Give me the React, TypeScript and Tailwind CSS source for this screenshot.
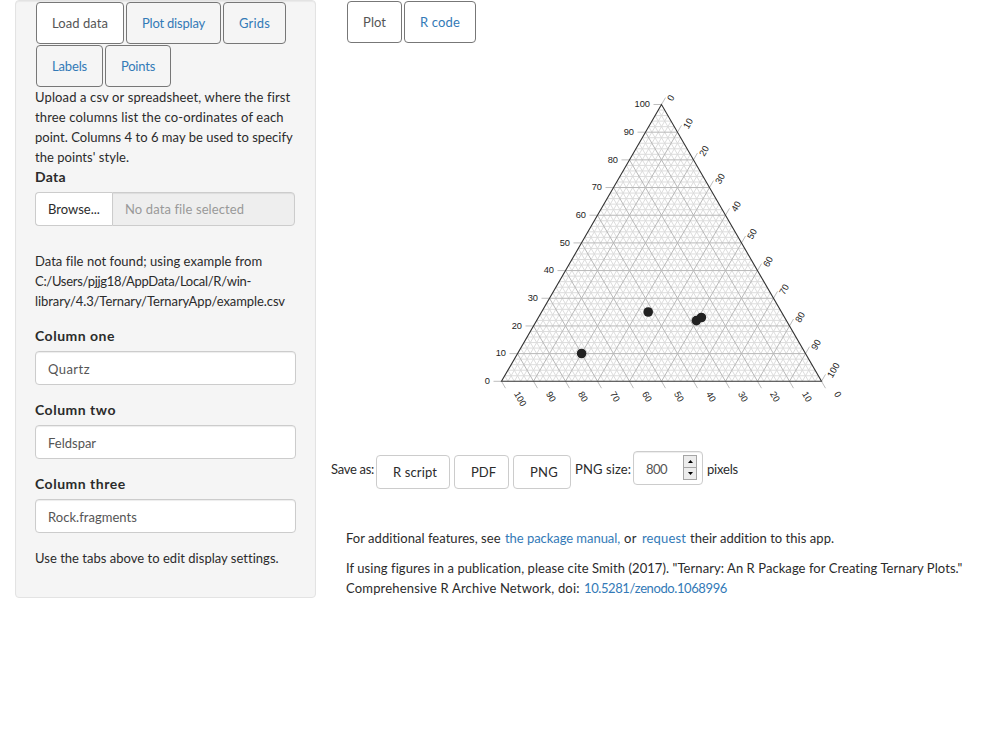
import type { ReactNode } from "react";

const APEX = { x: 661.5, y: 104.5 };
const SIDE = 320;
const HEIGHT = 276.8;
const LEFT_X = APEX.x - SIDE / 2;
const BASE_Y = APEX.y + HEIGHT;
const STEPS = Array.from({ length: 11 }, (_, i) => i * 10);
const MINOR = Array.from({ length: 49 }, (_, i) => (i + 1) * 2).filter((v) => v % 10 !== 0);
const MAJOR = STEPS.slice(1, -1);

const leftEdge = (v: number) => [LEFT_X + (SIDE / 2) * (v / 100), BASE_Y - HEIGHT * (v / 100)];
const rightEdge = (v: number) => [APEX.x + (SIDE / 2) * (v / 100), APEX.y + HEIGHT * (v / 100)];
const bottomEdge = (v: number) => [LEFT_X + SIDE * (1 - v / 100), BASE_Y];

// The three families of grid lines for one percentage value.
function gridPath(v: number) {
  const [lx, ly] = leftEdge(v);
  const [hx] = rightEdge(100 - v);
  const [rx, ry] = rightEdge(v);
  const [bx, by] = bottomEdge(100 - v);
  return `M${lx} ${ly}H${hx}M${rx} ${ry}L${bx} ${by}L${lx} ${ly}`;
}

const POINTS = [
  [581.6, 353.5],
  [648.2, 312],
  [696.4, 320.6],
  [701.4, 317.5],
];

function TernaryPlot() {
  return (
    <svg
      className="block"
      width="400"
      height="340"
      viewBox="460 80 400 340"
      fontFamily='"Liberation Sans", Arial, sans-serif'
      fontSize="9.3"
      fill="#1c1c1c"
    >
      <g fill="none">
        {MINOR.map((v) => (
          <path key={v} d={gridPath(v)} stroke="#dadada" strokeWidth="0.95" />
        ))}
        {MAJOR.map((v) => (
          <path key={v} d={gridPath(v)} stroke="#b8b8b8" strokeWidth="1" />
        ))}
      </g>
      {STEPS.map((v) => {
        const [lx, ly] = leftEdge(v);
        const [rx, ry] = rightEdge(v);
        const [bx, by] = bottomEdge(v);
        return (
          <g key={v}>
            <path
              d={`M${lx} ${ly}h-8M${rx} ${ry}l4 -6.9M${bx} ${by}l4 6.9`}
              stroke="#bdbdbd"
              fill="none"
            />
            <text x={lx - 11.5} y={ly + 2.7} textAnchor="end">
              {v}
            </text>
            <text transform={`translate(${rx + 8} ${ry - 4.4}) rotate(-60)`} dy="3.2">
              {v}
            </text>
            <text transform={`translate(${bx + 14.9} ${by + 10.8}) rotate(60)`} dy="3.2">
              {v}
            </text>
          </g>
        );
      })}
      <path
        d={`M${APEX.x} ${APEX.y}L${LEFT_X} ${BASE_Y}H${LEFT_X + SIDE}Z`}
        fill="none"
        stroke="#333"
        strokeWidth="1.1"
      />
      {POINTS.map(([x, y]) => (
        <circle key={x} cx={x} cy={y} r="4.8" fill="#222" />
      ))}
    </svg>
  );
}

function Tab({ className, active, children }: { className: string; active?: boolean; children: ReactNode }) {
  return (
    <button
      className={`flex h-[42px] shrink-0 items-center justify-center rounded border border-[#777] whitespace-nowrap ${
        active ? "bg-white text-[#555]" : "text-[#337ab7]"
      } ${className}`}
    >
      {children}
    </button>
  );
}

function Field({ label, value, className }: { label: string; value: string; className: string }) {
  return (
    <div className="mb-[15px]">
      <div className="mb-[5px] h-5 text-[14px] font-bold tracking-[0.5px]">{label}</div>
      <div
        className={`flex h-[34px] w-[261px] items-center rounded border border-[#ccc] bg-white px-3 pt-0.5 text-[#555] shadow-[inset_0_1px_1px_rgba(0,0,0,0.075)] ${className}`}
      >
        {value}
      </div>
    </div>
  );
}

function SaveButton({ className, children }: { className: string; children: ReactNode }) {
  return (
    <button
      className={`mt-1 flex h-[34px] items-center justify-center rounded border border-[#ccc] bg-white pl-1 ${className}`}
    >
      {children}
    </button>
  );
}

export default function App() {
  return (
    <div className="flex h-[744px] w-[992px] items-start overflow-hidden bg-white pl-[15px] font-[Lato,sans-serif] text-[13px] leading-5 text-[#2b2b2b]">
      <aside className="h-[598px] w-[301px] shrink-0 rounded border border-[#e3e3e3] bg-[#f5f5f5] pt-px pl-[19px] shadow-[inset_0_1px_1px_rgba(0,0,0,0.05)]">
        <nav className="ml-px flex w-[252px] flex-wrap gap-x-0.5 gap-y-px">
          <Tab active className="w-[88px] tracking-[0.06px]">Load data</Tab>
          <Tab className="w-[95px] tracking-[-0.2px]">Plot display</Tab>
          <Tab className="w-[63px] tracking-[0.16px]">Grids</Tab>
          <Tab className="w-[67px] tracking-[-0.15px]">Labels</Tab>
          <Tab className="w-[66px] tracking-[-0.2px]">Points</Tab>
        </nav>
        <div className="whitespace-nowrap">
          <div className="tracking-[0.13px]">Upload a csv or spreadsheet, where the first</div>
          <div className="tracking-[0.15px]">three columns list the co-ordinates of each</div>
          <div className="tracking-[0.03px]">point. Columns 4 to 6 may be used to specify</div>
          <div className="tracking-[0.04px]">the points' style.</div>
        </div>
        <div className="mb-[5px] h-5 text-[14px] font-bold tracking-[0.3px]">Data</div>
        <div className="flex h-[34px] w-[260px]">
          <button className="w-[77px] rounded-l border border-r-0 border-[#ccc] bg-white">Browse...</button>
          <div className="flex flex-1 items-center rounded-r border border-[#ccc] bg-[#eee] pl-3 tracking-[0.11px] text-[#999] shadow-[inset_0_1px_1px_rgba(0,0,0,0.075)]">
            No data file selected
          </div>
        </div>
        <div className="mt-[25px] mb-[15px] whitespace-nowrap">
          <div className="tracking-[0.04px]">Data file not found; using example from</div>
          <div className="tracking-[-0.3px]">C:/Users/pjjg18/AppData/Local/R/win-</div>
          <div className="tracking-[-0.086px]">library/4.3/Ternary/TernaryApp/example.csv</div>
        </div>
        <Field label="Column one" value="Quartz" className="tracking-[0.45px]" />
        <Field label="Column two" value="Feldspar" className="tracking-normal" />
        <Field label="Column three" value="Rock.fragments" className="tracking-[0.04px]" />
        <div className="tracking-[0.02px]">Use the tabs above to edit display settings.</div>
      </aside>

      <main className="ml-[15px] flex flex-1 flex-col">
        <nav className="flex gap-0.5 pt-px pl-4">
          <Tab active className="w-[55px]">Plot</Tab>
          <Tab className="w-[72px] tracking-[0.15px]">R code</Tab>
        </nav>
        <div className="mt-[37px] ml-[129px]">
          <TernaryPlot />
        </div>
        <div className="mt-[31px] flex h-[38px] items-start">
          <span className="mt-2 w-[45px] tracking-[-0.3px] whitespace-nowrap">Save as:</span>
          <SaveButton className="w-[74px] tracking-[0.12px]">R script</SaveButton>
          <SaveButton className="ml-1 w-[55px]">PDF</SaveButton>
          <SaveButton className="ml-1 w-[58px] tracking-[0.27px]">PNG</SaveButton>
          <span className="mt-2 ml-1 w-[58px] tracking-[0.1px] whitespace-nowrap">PNG size:</span>
          <div className="flex h-[34px] w-[70px] items-center justify-between rounded border border-[#ccc] pr-[5px] pl-3 tracking-[-0.5px] text-[#555] shadow-[inset_0_1px_1px_rgba(0,0,0,0.075)]">
            <span className="pt-0.5">800</span>
            <span className="mb-[2px] flex h-[25px] w-[14px] flex-col border border-[#a5a5a5] bg-[#ececec] text-black">
              <span className="flex flex-1 items-center justify-center border-b border-[#a5a5a5]">
                <svg width="5" height="3" viewBox="0 0 5 3"><path d="M0 3L2.5 0L5 3Z" /></svg>
              </span>
              <span className="flex flex-1 items-center justify-center">
                <svg width="5" height="3" viewBox="0 0 5 3"><path d="M0 0L2.5 3L5 0Z" /></svg>
              </span>
            </span>
          </div>
          <span className="mt-2 ml-1 tracking-[-0.2px]">pixels</span>
        </div>
        <div className="mt-[39px] ml-[15px] whitespace-nowrap">
          <p className="mb-2.5 flex">
            <span className="w-[159px] tracking-[0.04px]">For additional features, see</span>
            <a className="w-[119px] tracking-[-0.05px] text-[#337ab7]">the package manual,</a>
            <span className="w-[18px] tracking-[0.5px]">or</span>
            <a className="w-12 tracking-[0.14px] text-[#337ab7]">request</a>
            <span className="tracking-[0.04px]">their addition to this app.</span>
          </p>
          <p className="tracking-[0.07px]">
            If using figures in a publication, please cite Smith (2017). "Ternary: An R Package for Creating Ternary Plots."
          </p>
          <p className="flex">
            <span className="w-[238px] tracking-[0.18px]">Comprehensive R Archive Network, doi:</span>
            <a className="tracking-[-0.4px] text-[#337ab7]">10.5281/zenodo.1068996</a>
          </p>
        </div>
      </main>
    </div>
  );
}
